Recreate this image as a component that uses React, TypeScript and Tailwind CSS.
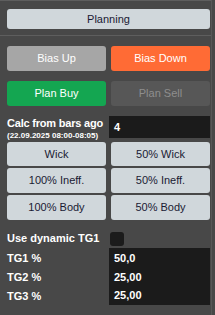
export default function App() {
  const lightBtn =
    'rounded-[3px] bg-[#d0d7db] text-[11px] text-[#1a1a33] flex items-center justify-center'

  return (
    <div
      className="w-[215px] h-[315px] bg-[#484848] overflow-hidden"
      style={{ fontFamily: '"Liberation Sans", Arial, sans-serif' }}
    >
      <div className="w-[212px] h-full border-r border-[#575757]">
        <div className="h-px bg-[#5e5e5e]" />

        <div className="pl-[7px] pr-[1px] pt-[8px] pb-[6px]">
          <div className="h-[20px] rounded-[3px] bg-[#d0d7db] text-[11px] text-[#1a1a33] flex items-center justify-center">
            Planning
          </div>
        </div>

        <div className="h-px bg-[#5e5e5e]" />

        <div className="pl-[7px] pr-[1px] pt-[10px]">
          <div className="grid grid-cols-2 gap-[5px]">
            <div className="h-[25px] rounded-[3px] bg-[#a6a6a6] text-[11px] text-white flex items-center justify-center">
              Bias Up
            </div>
            <div className="h-[25px] rounded-[3px] bg-[#ff6b35] text-[11px] text-white flex items-center justify-center">
              Bias Down
            </div>
          </div>

          <div className="grid grid-cols-2 gap-[5px] mt-[10px]">
            <div className="h-[25px] rounded-[3px] bg-[#14a651] text-[11px] text-white flex items-center justify-center">
              Plan Buy
            </div>
            <div className="h-[25px] rounded-[3px] bg-[#575757] text-[11px] text-[#8e8e8e] flex items-center justify-center">
              Plan Sell
            </div>
          </div>

          <div className="grid grid-cols-[99px_1fr] gap-[3px] mt-[10px] items-start">
            <div className="text-white font-bold leading-none pt-[2px] whitespace-nowrap">
              <div className="text-[11px] tracking-[-0.2px]">Calc from bars ago</div>
              <div className="text-[8px] mt-[3px]">(22.09.2025 08:00-08:05)</div>
            </div>
            <div className="h-[22px] bg-[#1b1b1b] text-white font-bold text-[11px] flex items-center pl-[5px]">
              4
            </div>
          </div>

          <div className="grid grid-cols-2 gap-x-[5px] gap-y-[2px] mt-[2px]">
            <div className={lightBtn + ' h-[24px]'}>Wick</div>
            <div className={lightBtn + ' h-[24px]'}>50% Wick</div>
            <div className={lightBtn + ' h-[25px]'}>100% Ineff.</div>
            <div className={lightBtn + ' h-[25px]'}>50% Ineff.</div>
            <div className={lightBtn + ' h-[25px]'}>100% Body</div>
            <div className={lightBtn + ' h-[25px]'}>50% Body</div>
          </div>

          <div className="grid grid-cols-[99px_1fr] gap-[3px] mt-[11px] items-start">
            <div className="text-white font-bold text-[11px] leading-[14px] whitespace-nowrap">
              Use dynamic TG1
            </div>
            <div className="pt-[1px]">
              <div className="w-[14px] h-[14px] rounded-[3px] bg-[#1b1b1b] ml-[1px]" />
            </div>
          </div>

          <div className="grid grid-cols-[99px_1fr] gap-[3px] mt-[2px]">
            <div className="text-white font-bold text-[11px] flex flex-col pt-[1px]">
              <div className="h-[19px] flex items-center">TG1 %</div>
              <div className="h-[19px] flex items-center">TG2 %</div>
              <div className="h-[19px] flex items-center">TG3 %</div>
            </div>
            <div className="bg-[#1b1b1b] text-white font-bold text-[11px] flex flex-col pl-[5px] pt-[1px] h-[57px]">
              <div className="h-[19px] flex items-center">50,0</div>
              <div className="h-[19px] flex items-center">25,00</div>
              <div className="h-[19px] flex items-center">25,00</div>
            </div>
          </div>
        </div>
      </div>
    </div>
  )
}
